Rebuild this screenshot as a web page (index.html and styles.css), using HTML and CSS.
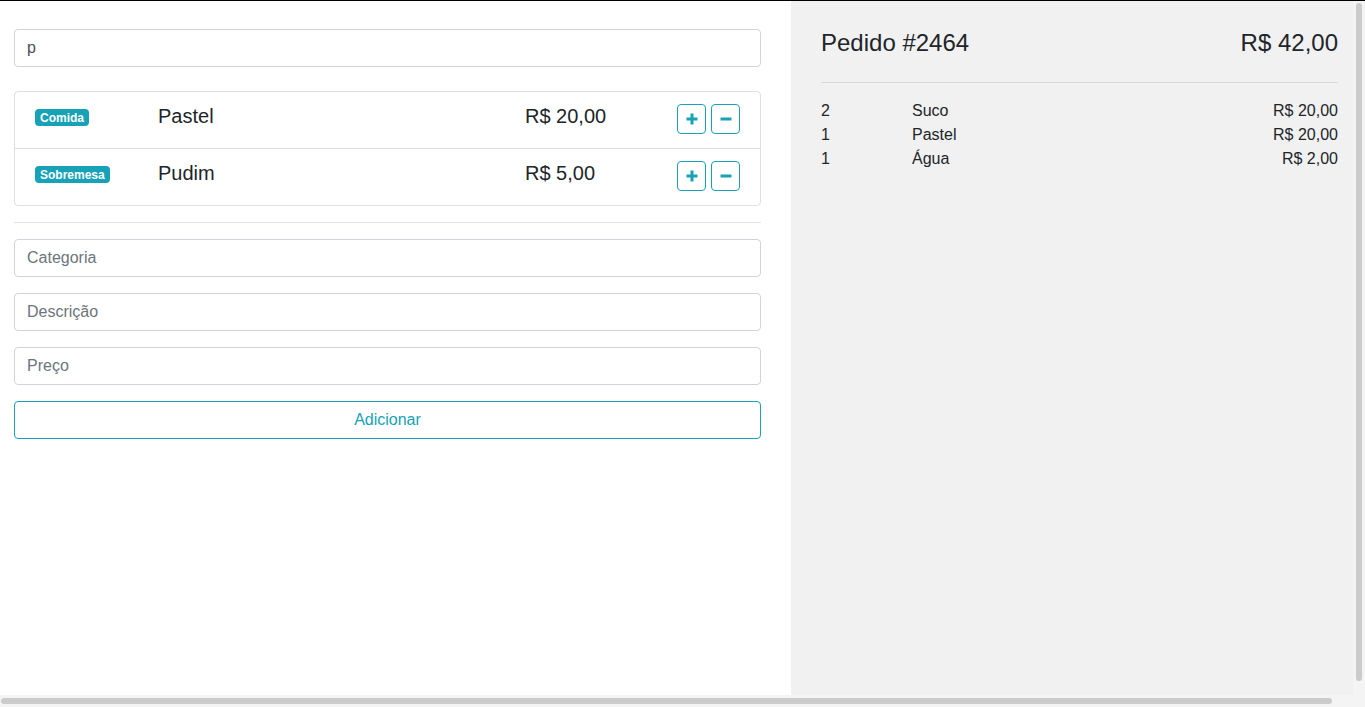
FILE: index.html
```html
<!DOCTYPE html>
<html lang="pt-BR">
<head>
<meta charset="utf-8">
<title>Pedido #2464</title>
<link rel="stylesheet" href="styles.css">
</head>
<body>
<div class="app">
  <section class="menu">
    <input class="field" type="text" value="p">
    <ul class="products">
      <li class="product">
        <span class="badge">Comida</span>
        <span class="name">Pastel</span>
        <span class="price">R$ 20,00</span>
        <span class="actions">
          <button class="qty-btn" type="button" aria-label="Adicionar"><svg width="12" height="12" viewBox="0 0 12 12"><path d="M6 0.5v11M0.5 6h11" stroke="currentColor" stroke-width="3"/></svg></button>
          <button class="qty-btn" type="button" aria-label="Remover"><svg width="12" height="12" viewBox="0 0 12 12"><path d="M0.5 6h11" stroke="currentColor" stroke-width="3"/></svg></button>
        </span>
      </li>
      <li class="product">
        <span class="badge">Sobremesa</span>
        <span class="name">Pudim</span>
        <span class="price">R$ 5,00</span>
        <span class="actions">
          <button class="qty-btn" type="button" aria-label="Adicionar"><svg width="12" height="12" viewBox="0 0 12 12"><path d="M6 0.5v11M0.5 6h11" stroke="currentColor" stroke-width="3"/></svg></button>
          <button class="qty-btn" type="button" aria-label="Remover"><svg width="12" height="12" viewBox="0 0 12 12"><path d="M0.5 6h11" stroke="currentColor" stroke-width="3"/></svg></button>
        </span>
      </li>
    </ul>
    <hr class="rule">
    <form class="new-product">
      <input class="field" type="text" placeholder="Categoria">
      <input class="field" type="text" placeholder="Descrição">
      <input class="field" type="text" placeholder="Preço">
      <button class="add-btn" type="button">Adicionar</button>
    </form>
  </section>
  <aside class="order">
    <div class="order-head">
      <h4 class="order-title">Pedido #2464</h4>
      <h4 class="order-total">R$ 42,00</h4>
    </div>
    <hr class="rule">
    <div class="order-items">
      <div class="order-row"><span>2</span><span>Suco</span><span class="right">R$ 20,00</span></div>
      <div class="order-row"><span>1</span><span>Pastel</span><span class="right">R$ 20,00</span></div>
      <div class="order-row"><span>1</span><span>Água</span><span class="right">R$ 2,00</span></div>
    </div>
  </aside>
</div>
<div class="scrollbar scrollbar-v" aria-hidden="true"><span class="thumb"></span></div>
<div class="scrollbar scrollbar-h" aria-hidden="true"><span class="thumb"></span></div>
</body>
</html>
```

FILE: styles.css
```css
* { box-sizing: border-box; }
html, body { margin: 0; padding: 0; height: 100%; overflow: hidden; }
body {
  font-family: "Liberation Sans", Arial, sans-serif;
  font-size: 16px;
  line-height: 1.5;
  color: #212529;
  background: #fff;
}
.app {
  display: flex;
  width: 100%;
  height: 100vh;
  border-top: 1px solid #000;
}
.menu {
  width: 791px;
  flex: 0 0 791px;
  padding: 28px 30px 0 14px;
}
.order {
  flex: 1 1 auto;
  background: #f1f1f1;
  padding: 28px 27px 0 30px;
}
.field {
  display: block;
  width: 100%;
  height: 38px;
  padding: 6px 12px;
  font-family: inherit;
  font-size: 16px;
  line-height: 1.5;
  color: #495057;
  background: #fff;
  border: 1px solid #ced4da;
  border-radius: 4px;
  outline: none;
}
.field::placeholder { color: #6c757d; opacity: 1; }
.products {
  list-style: none;
  margin: 24px 0 0;
  padding: 0;
  border: 1px solid rgba(0,0,0,.125);
  border-radius: 4px;
}
.product {
  box-sizing: content-box;
  display: grid;
  grid-template-columns: 123px 367px 1fr auto;
  align-items: start;
  padding: 12px 20px;
  height: 32px;
}
.product + .product { border-top: 1px solid rgba(0,0,0,.125); }
.badge {
  justify-self: start;
  margin-top: 5px;
  padding: 3px 5px 2px;
  font-size: 12px;
  font-weight: 700;
  line-height: 1;
  color: #fff;
  background: #17a2b8;
  border-radius: 4px;
}
.name, .price {
  font-size: 20px;
  line-height: 1.2;
  font-weight: 500;
}
.actions {
  display: flex;
  gap: 5px;
}
.qty-btn {
  display: flex;
  align-items: center;
  justify-content: center;
  width: 29px;
  height: 30px;
  padding: 0;
  color: #17a2b8;
  background: transparent;
  border: 1px solid #17a2b8;
  border-radius: 4px;
}
.rule {
  margin: 16px 0;
  border: 0;
  border-top: 1px solid rgba(0,0,0,.1);
}
.new-product {
  display: flex;
  flex-direction: column;
  gap: 16px;
}
.add-btn {
  height: 38px;
  font-family: inherit;
  font-size: 16px;
  color: #17a2b8;
  background: transparent;
  border: 1px solid #17a2b8;
  border-radius: 4px;
}
.order-head {
  display: flex;
  justify-content: space-between;
}
.order-title, .order-total {
  margin: 0 0 8px;
  font-size: 24px;
  font-weight: 500;
  line-height: 1.2;
}
.order-row {
  display: grid;
  grid-template-columns: 91px 1fr auto;
  line-height: 24px;
}
.right { text-align: right; }

/* browser scrollbars drawn over the page */
.scrollbar {
  position: fixed;
  background: #f4f4f4;
}
.scrollbar .thumb {
  display: block;
  width: 100%;
  height: 100%;
  background: #cbcbcb;
  border-radius: 3px;
}
.scrollbar-v {
  top: 1px;
  right: 0;
  bottom: 12px;
  width: 12px;
  padding: 2px 3px 14px;
}
.scrollbar-h {
  left: 0;
  right: 0;
  bottom: 0;
  height: 12px;
  padding: 3px 33px 3px 1px;
}
```
